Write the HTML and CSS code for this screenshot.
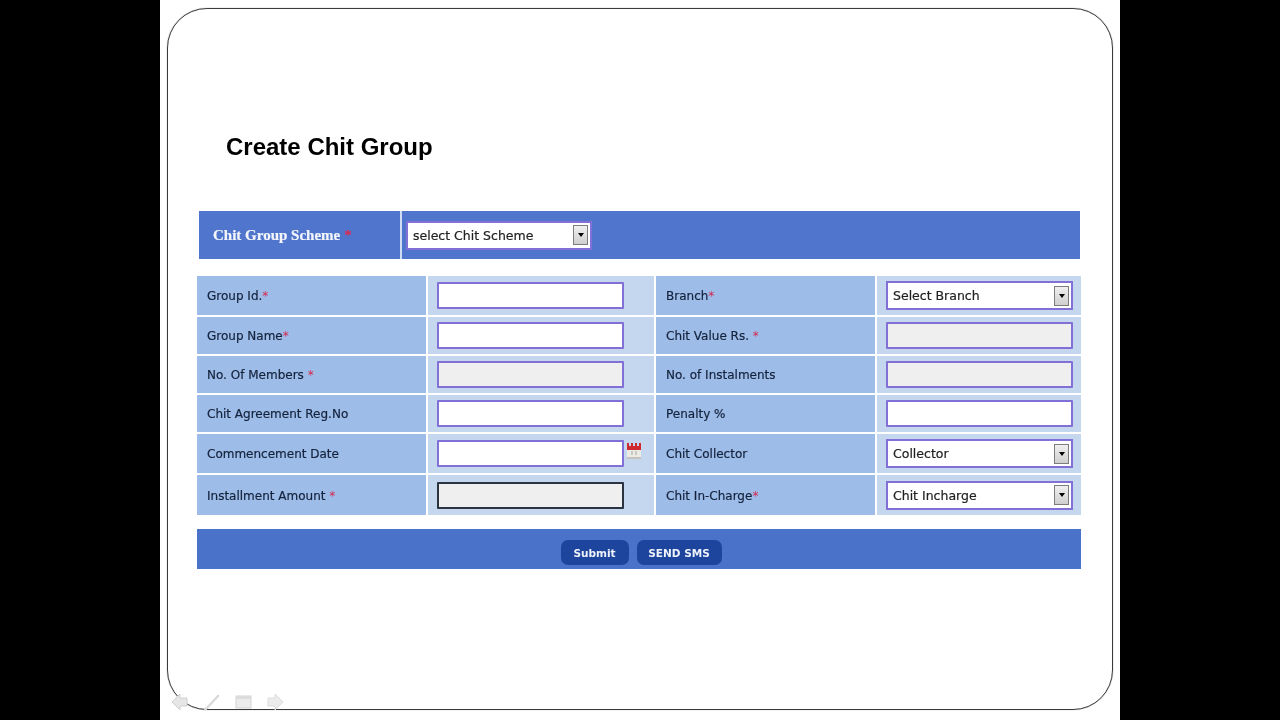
FILE: index.html
```html
<!DOCTYPE html>
<html lang="en">
<head>
<meta charset="utf-8">
<title>Create Chit Group</title>
<link rel="stylesheet" href="styles.css">
</head>
<body>
<main class="slide">
  <section class="frame">
    <h1 class="title">Create Chit Group</h1>
    <form class="form">
      <div class="scheme">
        <div class="scheme-label">Chit Group Scheme <span class="req">*</span></div>
        <div class="scheme-field">
          <div class="select select-scheme"><span>select Chit Scheme</span><i class="arrow"></i></div>
        </div>
      </div>
      <div class="fields">
        <div class="lab">Group Id.<span class="req">*</span></div>
        <div class="val"><input class="inp" type="text"></div>
        <div class="lab">Branch<span class="req">*</span></div>
        <div class="val"><div class="select"><span>Select Branch</span><i class="arrow"></i></div></div>

        <div class="lab">Group Name<span class="req">*</span></div>
        <div class="val"><input class="inp" type="text"></div>
        <div class="lab">Chit Value Rs. <span class="req">*</span></div>
        <div class="val"><input class="inp off" type="text"></div>

        <div class="lab">No. Of Members <span class="req">*</span></div>
        <div class="val"><input class="inp off" type="text"></div>
        <div class="lab">No. of Instalments</div>
        <div class="val"><input class="inp off" type="text"></div>

        <div class="lab">Chit Agreement Reg.No</div>
        <div class="val"><input class="inp" type="text"></div>
        <div class="lab">Penalty %</div>
        <div class="val"><input class="inp" type="text"></div>

        <div class="lab">Commencement Date</div>
        <div class="val val-date"><input class="inp" type="text">
          <svg class="cal" viewBox="0 0 14 16" width="14" height="16" aria-hidden="true">
            <path d="M0 0h2v3h2V0h2v3h2V0h2v3h2V0h2v7H0z" fill="#cf2a2e"/>
            <rect x="0" y="7" width="14" height="9" fill="#eceae5"/>
            <rect x="0" y="14" width="14" height="2" fill="#c4c2bc"/>
            <path d="M5 8v4M9 8v4" fill="none" stroke="#a9a6a0" stroke-width="1"/>
          </svg>
        </div>
        <div class="lab">Chit Collector</div>
        <div class="val"><div class="select"><span>Collector</span><i class="arrow"></i></div></div>

        <div class="lab">Installment Amount <span class="req">*</span></div>
        <div class="val"><input class="inp off dark" type="text"></div>
        <div class="lab">Chit In-Charge<span class="req">*</span></div>
        <div class="val"><div class="select"><span>Chit Incharge</span><i class="arrow"></i></div></div>
      </div>
      <div class="actions">
        <button class="btn btn-submit" type="button">Submit</button>
        <button class="btn btn-sms" type="button">SEND SMS</button>
      </div>
    </form>
  </section>
  <nav class="slide-nav" aria-hidden="true">
    <svg viewBox="0 0 17 18" width="17" height="18"><path d="M9 1v4h7v8H9v4L1 9z" fill="#e6e6e6" stroke="#d0d0d0"/></svg>
    <svg viewBox="0 0 17 18" width="17" height="18"><path d="M1 17 15 2l1 1L3 17z" fill="#e4e4e4" stroke="#d2d2d2"/></svg>
    <svg viewBox="0 0 17 14" width="17" height="14"><rect x="1" y="1" width="15" height="12" fill="#ececec" stroke="#d4d4d4"/><rect x="1" y="1" width="15" height="3" fill="#dcdcdc"/></svg>
    <svg viewBox="0 0 17 18" width="17" height="18"><path d="M8 1v4H1v8h7v4l8-8z" fill="#ececec" stroke="#dcdcdc"/></svg>
  </nav>
</main>
</body>
</html>
```
FILE: styles.css
```css
* { box-sizing: border-box; }
html, body { height: 100%; }
body {
  margin: 0;
  background: #000;
  display: flex;
  justify-content: center;
  overflow: hidden;
}
.slide {
  position: relative;
  width: 960px;
  height: 720px;
  background: #fff;
  padding: 8px 7px 10px;
  filter: blur(0.3px);
}
.frame {
  width: 946px;
  height: 702px;
  border: 1px solid #3a3a3a;
  border-radius: 40px;
  box-shadow: 0 0 1px #777;
  padding: 123px 0 0 29px;
}
.title {
  margin: 0 0 49px 29px;
  font: bold 24px/30px "Liberation Sans", Arial, sans-serif;
  color: #000;
}
.form { width: 884px; }
.scheme {
  display: grid;
  grid-template-columns: 203px 1fr;
  height: 48px;
  margin: 0 1px 17px 2px;
  background: #4f76cc;
}
.scheme-label {
  display: flex;
  align-items: center;
  gap: 4px;
  padding-left: 14px;
  border-right: 2px solid #cfdcf3;
  color: #f4f6fb;
  font: bold 15px "Liberation Serif", "Times New Roman", serif;
  -webkit-text-stroke: 0.2px #f4f6fb;
}
.scheme-label .req { color: #e0284f; -webkit-text-stroke: 0; }
.scheme-field {
  display: flex;
  align-items: center;
  padding-left: 4px;
}
.fields {
  display: grid;
  grid-template-columns: 229px 226px 219px 204px;
  grid-template-rows: 39px 37px 37px 37px 39px 40px;
  gap: 2px;
}
.lab {
  display: flex;
  align-items: center;
  padding: 1px 0 0 10px;
  background: #9dbce8;
  color: #14233c;
  font: 12px "DejaVu Sans", Verdana, sans-serif;
  -webkit-text-stroke: 0.2px #14233c;
  white-space: pre;
}
.req { color: #d8274e; -webkit-text-stroke: 0; }
.val {
  display: flex;
  align-items: center;
  padding-left: 9px;
  background: #c5d6ef;
}
.val-date { gap: 3px; }
.cal { align-self: flex-start; margin-top: 9px; }
.inp {
  display: block;
  width: 187px;
  height: 27px;
  padding: 0 6px;
  border: 2px solid #8270d6;
  border-radius: 1px;
  background: #fff;
  outline: 0;
}
.off { background: #efefef; }
.dark { border-color: #2c3340; }
.select {
  display: flex;
  align-items: center;
  justify-content: space-between;
  width: 187px;
  height: 29px;
  padding: 0 2px 0 5px;
  border: 2px solid #8270d6;
  background: #fff;
  color: #222;
  font: 12.5px "DejaVu Sans", Verdana, sans-serif;
  -webkit-text-stroke: 0.2px #222;
}
.select-scheme { width: 186px; padding-left: 5px; }
.arrow {
  display: flex;
  align-items: center;
  justify-content: center;
  width: 15px;
  height: 20px;
  border: 1px solid #7d7d7d;
  background: linear-gradient(#f0f0f0, #cfcfcf);
}
.arrow::after {
  content: "";
  border: 3.5px solid transparent;
  border-top: 4px solid #000;
  border-bottom: 0;
}
.actions {
  display: flex;
  justify-content: center;
  gap: 8px;
  height: 40px;
  margin-top: 14px;
  padding: 11px 0 0 4px;
  background: #4b72c9;
}
.btn {
  height: 25px;
  padding: 0;
  border: 0;
  border-radius: 7px;
  background: #1e459e;
  color: #eef2fa;
  font: bold 10.5px "DejaVu Sans", Verdana, sans-serif;
}
.btn-submit { width: 68px; }
.btn-sms { width: 85px; }
.slide-nav {
  position: absolute;
  left: 11px;
  top: 693px;
  display: flex;
  align-items: center;
  gap: 15px;
}
```
